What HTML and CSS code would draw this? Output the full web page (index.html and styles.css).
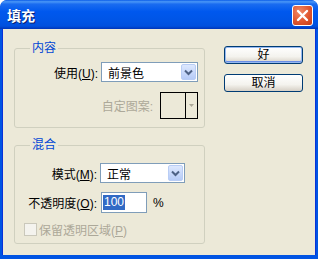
FILE: index.html
```html
<!DOCTYPE html>
<html lang="zh-CN">
<head>
    <meta charset="UTF-8">
    <title>填充</title>
    <link rel="stylesheet" href="styles.css">
</head>
<body>
    <div class="window">
        <div class="titlebar">
            <span class="title">填充</span>
            <span class="close">
                <svg width="13" height="13" viewBox="0 0 13 13">
                    <path d="M2 2 L11 11 M11 2 L2 11" stroke="#fff" stroke-width="2.4" stroke-linecap="round"/>
                </svg>
            </span>
        </div>
        <div class="client">
            <div class="groups">
                <fieldset class="group group-content">
                    <legend>内容</legend>
                    <div class="row row-use">
                        <span class="label">使用(<u>U</u>):</span>
                        <div class="combo combo-use">
                            <span class="combo-text">前景色</span>
                            <span class="combo-btn">
                                <svg width="9" height="7" viewBox="0 0 9 7"><path d="M1 1.5 L4.5 5 L8 1.5" fill="none" stroke="#4d6185" stroke-width="2"/></svg>
                            </span>
                        </div>
                    </div>
                    <div class="row row-pattern">
                        <span class="label disabled">自定图案:</span>
                        <div class="pattern">
                            <span class="pattern-swatch"></span>
                            <span class="pattern-btn">
                                <svg width="5" height="3" viewBox="0 0 5 3"><path d="M0 0 L5 0 L2.5 3 Z" fill="#aca899"/></svg>
                            </span>
                        </div>
                    </div>
                </fieldset>
                <fieldset class="group group-blend">
                    <legend>混合</legend>
                    <div class="blend-grid">
                        <span class="label">模式(<u>M</u>):</span>
                        <div class="combo combo-mode">
                            <span class="combo-text">正常</span>
                            <span class="combo-btn">
                                <svg width="9" height="7" viewBox="0 0 9 7"><path d="M1 1.5 L4.5 5 L8 1.5" fill="none" stroke="#4d6185" stroke-width="2"/></svg>
                            </span>
                        </div>
                        <span class="label">不透明度(<u>O</u>):</span>
                        <div class="opacity">
                            <div class="textbox"><span class="sel">100</span></div>
                            <span class="unit">%</span>
                        </div>
                    </div>
                    <div class="check">
                        <span class="box"></span>
                        <span class="disabled">保留透明区域(<u>P</u>)</span>
                    </div>
                </fieldset>
            </div>
            <div class="buttons">
                <button class="btn btn-default">好</button>
                <button class="btn">取消</button>
            </div>
        </div>
    </div>
</body>
</html>
```

FILE: styles.css
```css
body {
    margin: 0;
    font-family: "Liberation Sans", "Noto Sans CJK SC", sans-serif;
    font-size: 12px;
    color: #000;
    background: #fff;
}
.window {
    width: 318px;
    height: 259px;
    box-sizing: border-box;
    background: #0054e3;
    border-radius: 7px 7px 0 0;
    padding: 0 3px 4px 3px;
    display: flex;
    flex-direction: column;
    overflow: hidden;
}
.titlebar {
    height: 29px;
    margin: 0 -3px;
    padding: 0 5px 0 7px;
    display: flex;
    align-items: center;
    justify-content: space-between;
    background: linear-gradient(to bottom, #0a5ce8 0%, #4a97f7 6%, #1a6cf0 14%, #0058ee 40%, #0055e6 70%, #0050de 90%, #0035b8 100%);
    border-radius: 7px 7px 0 0;
}
.title {
    color: #fff;
    font-weight: bold;
    font-size: 14px;
    text-shadow: 1px 1px 0 #0a1f6e;
    margin-top: 1px;
}
.close {
    width: 21px;
    height: 21px;
    box-sizing: border-box;
    border: 1px solid #fff;
    border-radius: 3px;
    background: radial-gradient(circle at 35% 30%, #f08a68 0%, #e0562f 55%, #c43c17 100%);
    display: flex;
    align-items: center;
    justify-content: center;
    margin-top: 2px;
}
.client {
    flex: 1;
    background: #ece9d8;
    display: flex;
    padding-left: 11px;
    gap: 19px;
    border-left: 1px solid #0831d9;
    border-right: 1px solid #0831d9;
    margin: 0 -1px;
}
.groups {
    display: flex;
    flex-direction: column;
    padding-top: 12px;
    gap: 10px;
}
.group {
    width: 191px;
    box-sizing: border-box;
    margin: 0;
    padding: 0;
    border: 1px solid #d0d0bf;
    border-radius: 3px;
    min-width: 0;
}
.group legend {
    color: #0046d5;
    font-size: 12px;
    line-height: 14px;
    margin-left: 15px;
    padding: 0 2px;
}
.label {
    white-space: nowrap;
}
.disabled {
    color: #aca899;
}
.row {
    display: flex;
    justify-content: flex-end;
    align-items: center;
    padding-right: 6px;
}
.row-use {
    margin-top: 7px;
    height: 20px;
    gap: 3px;
}
.row-pattern {
    margin-top: 10px;
    margin-bottom: 8px;
    height: 27px;
    gap: 7px;
}
.combo {
    height: 20px;
    box-sizing: border-box;
    border: 1px solid #7f9db9;
    background: #fff;
    display: flex;
    align-items: center;
    justify-content: space-between;
    padding-right: 1px;
}
.combo-use {
    width: 97px;
}
.combo-mode {
    width: 85px;
}
.combo-text {
    padding-left: 6px;
}
.combo-btn {
    width: 15px;
    height: 16px;
    box-sizing: border-box;
    border: 1px solid #b9cdf5;
    border-radius: 2px;
    background: linear-gradient(to bottom, #dde8fe, #b6cbf7);
    display: flex;
    align-items: center;
    justify-content: center;
}
.pattern {
    width: 38px;
    height: 27px;
    box-sizing: border-box;
    border: 1px solid #000;
    display: flex;
}
.pattern-swatch {
    flex: 1;
    border-right: 1px solid #000;
}
.pattern-btn {
    width: 11px;
    display: flex;
    align-items: center;
    justify-content: center;
}
.blend-grid {
    display: grid;
    grid-template-columns: 82px auto;
    grid-template-rows: 20px 21px;
    column-gap: 3px;
    row-gap: 9px;
    align-items: center;
    justify-items: start;
    margin-top: 11px;
}
.blend-grid .label {
    justify-self: end;
}
.opacity {
    display: flex;
    align-items: center;
    gap: 6px;
    margin-left: 1px;
}
.textbox {
    width: 46px;
    height: 21px;
    box-sizing: border-box;
    border: 1px solid #7f9db9;
    background: #fff;
    display: flex;
    align-items: center;
    padding-left: 1px;
}
.sel {
    background: #316ac5;
    color: #fff;
    line-height: 15px;
    padding: 0 1px;
}
.check {
    display: flex;
    align-items: center;
    gap: 2px;
    margin: 10px 0 7px 9px;
    height: 13px;
}
.box {
    width: 13px;
    height: 13px;
    box-sizing: border-box;
    border: 1px solid #cac8bb;
    background: #f4f3ee;
}
.buttons {
    display: flex;
    flex-direction: column;
    padding-top: 17px;
    gap: 10px;
}
.btn {
    width: 79px;
    height: 18px;
    box-sizing: border-box;
    border: 1px solid #003c74;
    border-radius: 3px;
    background: linear-gradient(to bottom, #ffffff 0%, #f4f3ee 60%, #d6d0c5 100%);
    font-family: "Liberation Sans", "Noto Sans CJK SC", sans-serif;
    font-size: 12px;
    line-height: 14px;
    padding: 0;
    color: #000;
}
.btn-default {
    box-shadow: inset 0 0 0 1px #97b9f0, inset 0 -1px 0 1px #6a8ee6;
}
```
